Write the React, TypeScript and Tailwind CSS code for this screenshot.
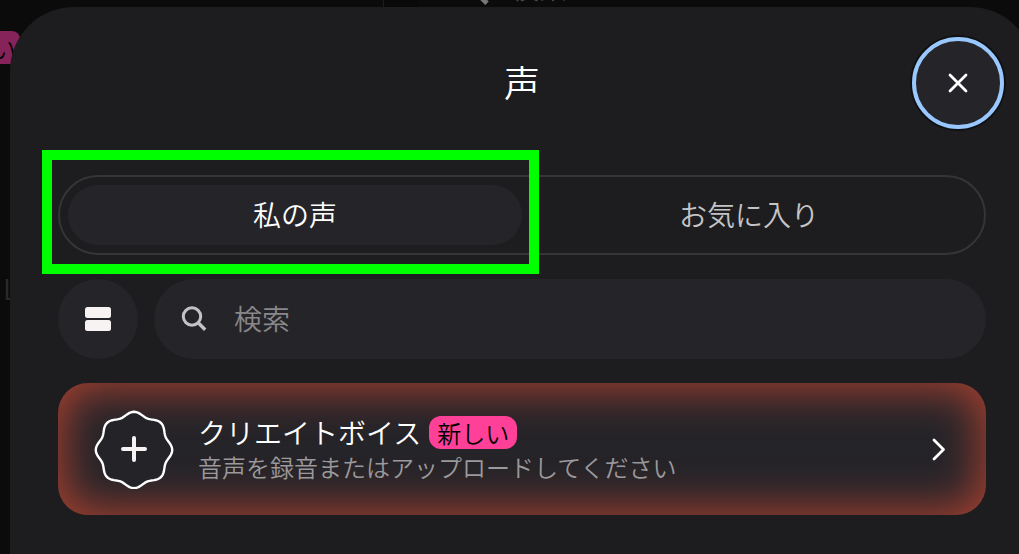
import React from "react";

// outline of the wavy seal around the plus sign
const sealPath = (() => {
  const points: string[] = [];
  for (let i = 0; i < 160; i++) {
    const angle = (i / 160) * Math.PI * 2;
    const radius = 36.2 + 2 * Math.cos(angle * 8);
    const x = 40 + radius * Math.cos(angle);
    const y = 41 + radius * Math.sin(angle);
    points.push(`${x.toFixed(2)} ${y.toFixed(2)}`);
  }
  return `M${points.join("L")}Z`;
})();

const SearchIcon = ({ className }: { className?: string }) => (
  <svg viewBox="0 0 28 28" fill="none" stroke="currentColor" className={className}>
    <circle cx="12" cy="11.5" r="8.7" strokeWidth="3" />
    <path d="M18.2 17.7l7 7" strokeWidth="3.4" />
  </svg>
);

const Backdrop = () => (
  <div aria-hidden="true" className="absolute inset-0 overflow-hidden bg-[#0b0b0c]">
    <div className="flex h-2 items-end overflow-hidden pl-[383px]">
      <div className="h-2 w-9 border-l border-[#1c1c1d] bg-[#090909]" />
      <div className="flex h-10 items-end gap-5 pl-8 text-[28px] leading-[42px] text-[#4a4a4c]">
        <SearchIcon className="size-10 text-[#77777a]" />
        検索
      </div>
    </div>
    <div className="mt-[23px] flex h-[33px] w-5 items-center justify-end rounded-r-lg bg-[#85235a] pr-1 text-2xl text-black">
      い
    </div>
    <div className="mt-[208px] pl-[3px] text-[28px] leading-8 text-[#29292b]">L</div>
  </div>
);

const Header = () => (
  <header className="grid grid-cols-[1fr_auto_1fr] items-center px-[30px] pt-[30px]">
    <h1 className="col-start-2 pb-1 text-4xl text-white">声</h1>
    <button
      aria-label="閉じる"
      className="flex size-[92px] items-center justify-center justify-self-end rounded-full border-4 border-[#99c8ff] bg-[#252429] shadow-[0_0_0_2px_#101113]"
    >
      <svg viewBox="0 0 24 24" fill="none" stroke="white" strokeWidth="2.8" strokeLinecap="round" className="size-6">
        <path d="M4 4l16 16M20 4L4 20" />
      </svg>
    </button>
  </header>
);

const Tabs = () => (
  <div role="tablist" className="flex h-20 rounded-full border-2 border-[#353537] p-2 text-[28px]">
    <div className="relative flex flex-1">
      <button role="tab" aria-selected="true" className="flex-1 rounded-full bg-[#252429] pb-0.5 text-white">
        私の声
      </button>
      <div className="pointer-events-none absolute -top-[35px] -right-[17px] -bottom-[29px] -left-[26px] border-10 border-[#00ff00]" />
    </div>
    <button role="tab" aria-selected="false" className="flex-1 rounded-full pb-0.5 text-[#c4c4c6]">
      お気に入り
    </button>
  </div>
);

const SearchRow = () => (
  <div className="flex gap-4">
    <button aria-label="表示切替" className="flex size-20 shrink-0 items-center justify-center rounded-full bg-[#252429]">
      <svg viewBox="0 0 28 28" fill="#f6f3f2" className="size-7">
        <rect x="1" y="2" width="26" height="11" rx="2.5" />
        <rect x="1" y="15" width="26" height="11" rx="2.5" />
      </svg>
    </button>
    <label className="flex h-20 flex-1 items-center gap-[26px] rounded-full bg-[#252429] px-[26px]">
      <SearchIcon className="size-7 shrink-0 text-[#c3c3c5]" />
      <input
        type="search"
        aria-label="検索"
        placeholder="検索"
        className="w-full bg-transparent pb-0.5 text-[28px] text-white outline-none placeholder:text-[#88888a]"
      />
    </label>
  </div>
);

const CreateVoiceCard = () => (
  <button className="flex h-[132px] w-full items-center gap-6 rounded-[30px] bg-[#252429] px-9 text-left shadow-[inset_0_0_44px_6px_#a74130]">
    <svg viewBox="0 0 80 80" fill="none" stroke="white" className="size-20 shrink-0">
      <path d={sealPath} fill="#242328" strokeWidth="2.4" strokeLinejoin="round" />
      <path d="M40 29v22M29 40h22" stroke="#f6f3f2" strokeWidth="4" strokeLinecap="round" />
    </svg>
    <span className="flex flex-1 flex-col">
      <span className="flex items-center gap-2 text-[28px] leading-9 text-white">
        クリエイトボイス
        <span className="rounded-xl bg-[#ff4099] px-2 text-2xl leading-[33px] text-black">新しい</span>
      </span>
      <span className="text-2xl leading-[34px] text-[#9b999b]">音声を録音またはアップロードしてください</span>
    </span>
    <svg viewBox="0 0 24 24" fill="none" stroke="white" strokeWidth="2.8" strokeLinecap="round" strokeLinejoin="round" className="size-6">
      <path d="M8 3l9.500 9.500L8 22" />
    </svg>
  </button>
);

const App = () => {
  return (
    <div className="relative h-screen overflow-hidden font-['Noto_Sans_CJK_JP',sans-serif] font-[350]">
      <Backdrop />
      <main className="relative mt-[7px] -mr-[15px] ml-[10px] min-h-screen rounded-t-[64px] bg-[#1d1d1f]">
        <Header />
        <div className="flex flex-col gap-6 px-12 pt-[46px]">
          <Tabs />
          <SearchRow />
          <CreateVoiceCard />
        </div>
      </main>
    </div>
  );
};

export default App;
